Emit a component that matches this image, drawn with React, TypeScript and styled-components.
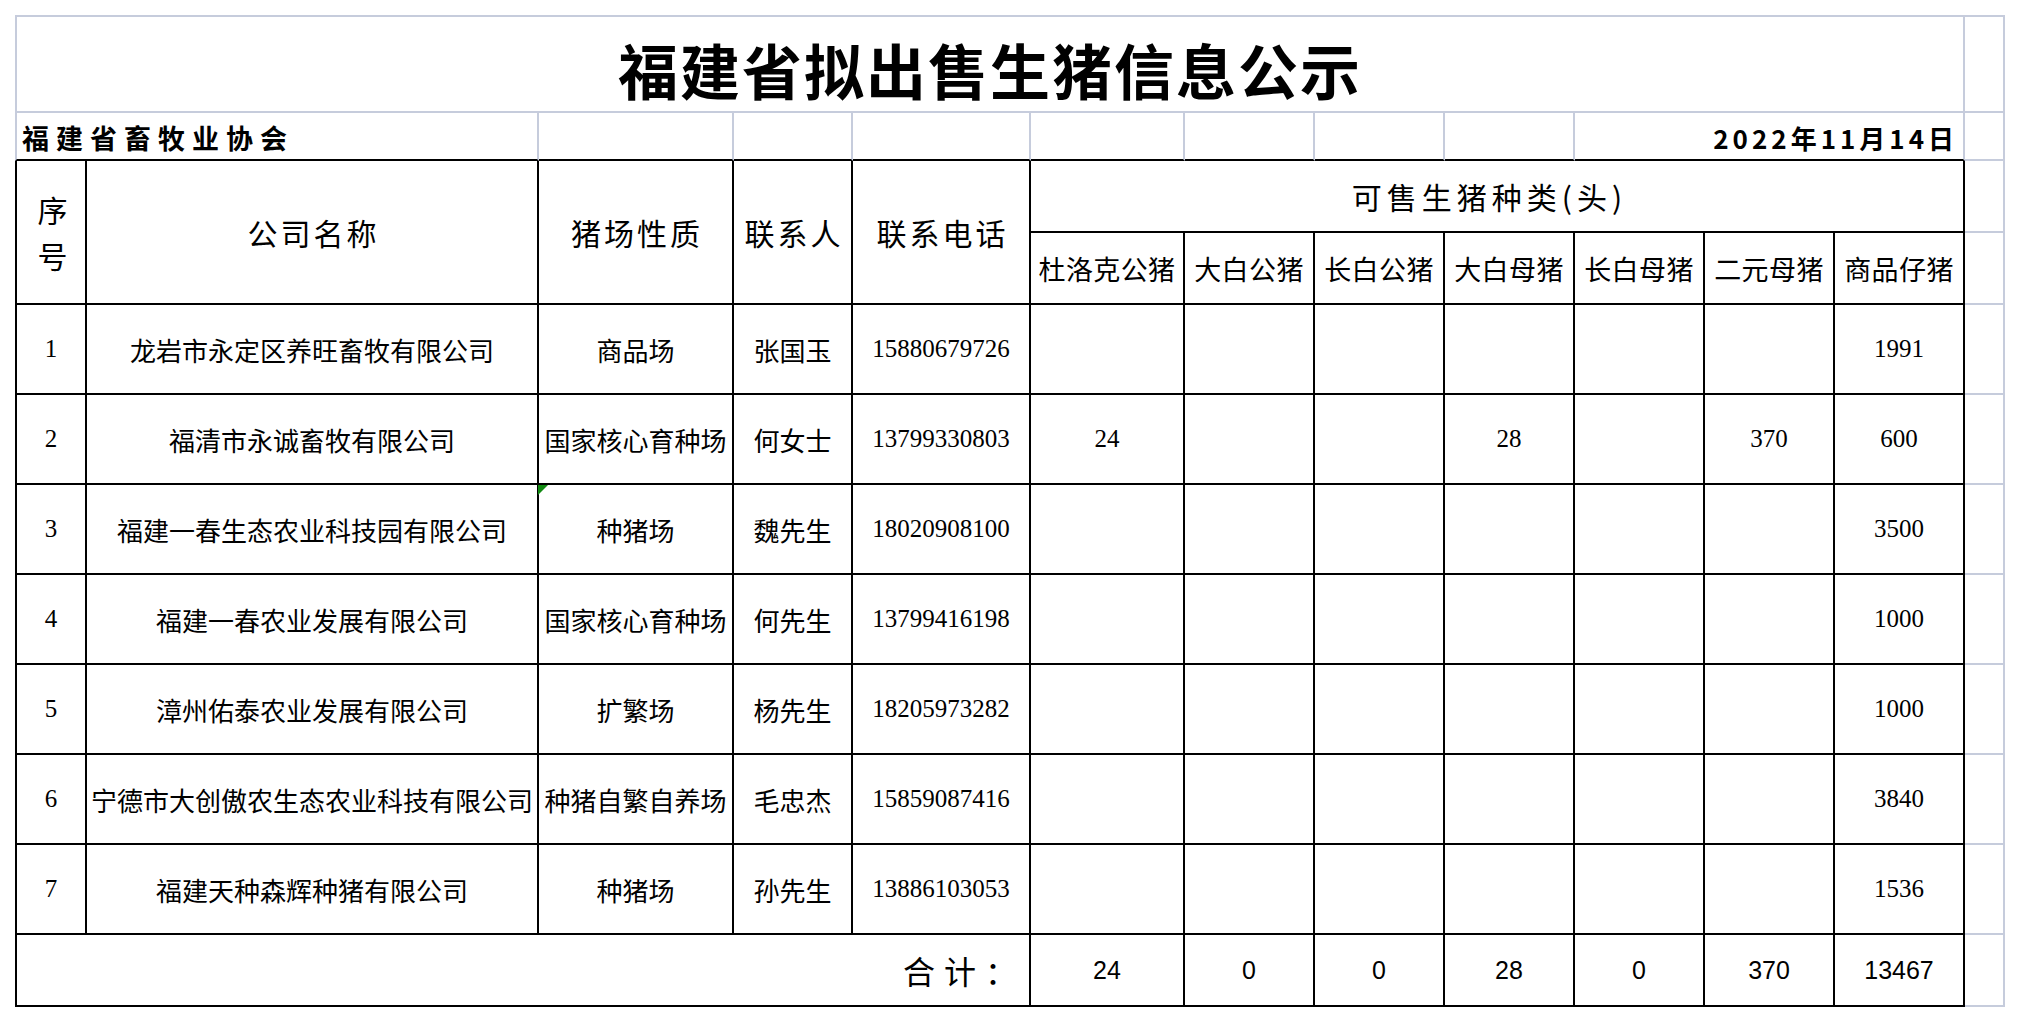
import React from "react";
import styled, { createGlobalStyle } from "styled-components";

const GRID = "#c6ccdc";
const INK = "#000";

const GlobalStyle = createGlobalStyle`
  html, body {
    margin: 0;
    padding: 0;
    background: #fff;
  }
  body {
    font-family: "Noto Sans CJK SC", "Liberation Serif", serif;
    color: #000;
  }
`;

const Page = styled.div`
  padding: 15px 0 0 15px;
`;

const Sheet = styled.div`
  display: grid;
  grid-template-columns: 72px 452px 195px 119px 178px 154px repeat(6, 130px) 40px;
  grid-template-rows: 98px 48px 72px 72px repeat(7, 90px) 72px;
  width: max-content;
`;

type CellProps = {
  $span?: number;
  $rows?: number;
  $r?: string;
  $b?: string;
  $l?: string;
  $t?: string;
};

const Cell = styled.div<CellProps>`
  box-sizing: border-box;
  grid-column: span ${(p) => p.$span ?? 1};
  grid-row: span ${(p) => p.$rows ?? 1};
  border-right: 2px solid ${(p) => p.$r ?? INK};
  border-bottom: 2px solid ${(p) => p.$b ?? INK};
  border-left: ${(p) => (p.$l ? `2px solid ${p.$l}` : "0")};
  border-top: ${(p) => (p.$t ? `2px solid ${p.$t}` : "0")};
  display: flex;
  align-items: center;
  justify-content: center;
  white-space: nowrap;
  position: relative;
`;

const Spare = styled(Cell)`
  border-right-color: ${GRID};
  border-bottom-color: ${GRID};
`;

const TitleCell = styled(Cell)`
  font-size: 60px;
  font-weight: 700;
  letter-spacing: 2px;
  padding-top: 8px;
`;

const Banner = styled(Cell)`
  justify-content: flex-start;
  padding: 3px 0 0 5px;
  font-size: 27px;
  font-weight: 700;
  letter-spacing: 7px;
`;

const DateCell = styled(Cell)`
  justify-content: flex-end;
  padding: 3px 5px 0 0;
  font-size: 26px;
  font-weight: 700;
  letter-spacing: 4px;
`;

const Head = styled(Cell)<{ $wide?: boolean }>`
  font-size: 30px;
  letter-spacing: ${(p) => (p.$wide ? "5px" : "3px")};
  padding-left: 3px;
  padding-right: ${(p) => (p.$wide ? "18px" : "0")};
`;

const Stacked = styled.span`
  display: block;
  text-align: center;
  line-height: 46px;
  letter-spacing: 0;
`;

const SubHead = styled(Cell)`
  font-size: 27px;
  letter-spacing: 0.4px;
`;

const Text = styled(Cell)`
  font-size: 26px;
`;

const Num = styled(Cell)`
  font-family: "Liberation Serif", serif;
  font-size: 25px;
`;

const Flag = styled.span`
  position: absolute;
  top: 0;
  left: -1px;
  width: 10px;
  height: 10px;
  background: #128a12;
  clip-path: polygon(0 0, 100% 0, 0 100%);
`;

const TotalLabel = styled(Cell)`
  justify-content: flex-end;
  padding-right: 3px;
  font-size: 32px;
  letter-spacing: 9px;
`;

const TotalNum = styled(Cell)`
  font-family: "Liberation Sans", sans-serif;
  font-size: 25px;
`;

type Farm = {
  no: number;
  name: string;
  kind: string;
  person: string;
  phone: string;
  counts: string[];
};

const farms: Farm[] = [
  { no: 1, name: "龙岩市永定区养旺畜牧有限公司", kind: "商品场", person: "张国玉", phone: "15880679726", counts: ["", "", "", "", "", "", "1991"] },
  { no: 2, name: "福清市永诚畜牧有限公司", kind: "国家核心育种场", person: "何女士", phone: "13799330803", counts: ["24", "", "", "28", "", "370", "600"] },
  { no: 3, name: "福建一春生态农业科技园有限公司", kind: "种猪场", person: "魏先生", phone: "18020908100", counts: ["", "", "", "", "", "", "3500"] },
  { no: 4, name: "福建一春农业发展有限公司", kind: "国家核心育种场", person: "何先生", phone: "13799416198", counts: ["", "", "", "", "", "", "1000"] },
  { no: 5, name: "漳州佑泰农业发展有限公司", kind: "扩繁场", person: "杨先生", phone: "18205973282", counts: ["", "", "", "", "", "", "1000"] },
  { no: 6, name: "宁德市大创傲农生态农业科技有限公司", kind: "种猪自繁自养场", person: "毛忠杰", phone: "15859087416", counts: ["", "", "", "", "", "", "3840"] },
  { no: 7, name: "福建天种森辉种猪有限公司", kind: "种猪场", person: "孙先生", phone: "13886103053", counts: ["", "", "", "", "", "", "1536"] },
];

const breeds = ["杜洛克公猪", "大白公猪", "长白公猪", "大白母猪", "长白母猪", "二元母猪", "商品仔猪"];
const totals = ["24", "0", "0", "28", "0", "370", "13467"];

function App() {
  return (
    <Page>
      <GlobalStyle />
      <Sheet>
        <TitleCell $span={12} $t={GRID} $l={GRID} $r={GRID} $b={GRID}>
          福建省拟出售生猪信息公示
        </TitleCell>
        <Spare $t={GRID} />

        <Banner $span={2} $l={GRID} $r={GRID}>
          福建省畜牧业协会
        </Banner>
        {Array.from({ length: 7 }).map((_, i) => (
          <Cell key={i} $r={GRID} />
        ))}
        <DateCell $span={3} $r={GRID}>
          2022年11月14日
        </DateCell>
        <Spare />

        <Head $rows={2} $l={INK}>
          <Stacked>
            序<br />号
          </Stacked>
        </Head>
        <Head $rows={2}>公司名称</Head>
        <Head $rows={2}>猪场性质</Head>
        <Head $rows={2}>联系人</Head>
        <Head $rows={2}>联系电话</Head>
        <Head $span={7} $wide>
          可售生猪种类(头)
        </Head>
        <Spare />
        {breeds.map((b) => (
          <SubHead key={b}>{b}</SubHead>
        ))}
        <Spare />

        {farms.map((f) => (
          <React.Fragment key={f.no}>
            <Num $l={INK}>{f.no}</Num>
            <Text>{f.name}</Text>
            <Text>
              {f.no === 3 && <Flag />}
              {f.kind}
            </Text>
            <Text>{f.person}</Text>
            <Num>{f.phone}</Num>
            {f.counts.map((c, i) => (
              <Num key={i}>{c}</Num>
            ))}
            <Spare />
          </React.Fragment>
        ))}

        <TotalLabel $span={5} $l={INK}>
          合计：
        </TotalLabel>
        {totals.map((t, i) => (
          <TotalNum key={i}>{t}</TotalNum>
        ))}
        <Spare />
      </Sheet>
    </Page>
  );
}

export default App;
